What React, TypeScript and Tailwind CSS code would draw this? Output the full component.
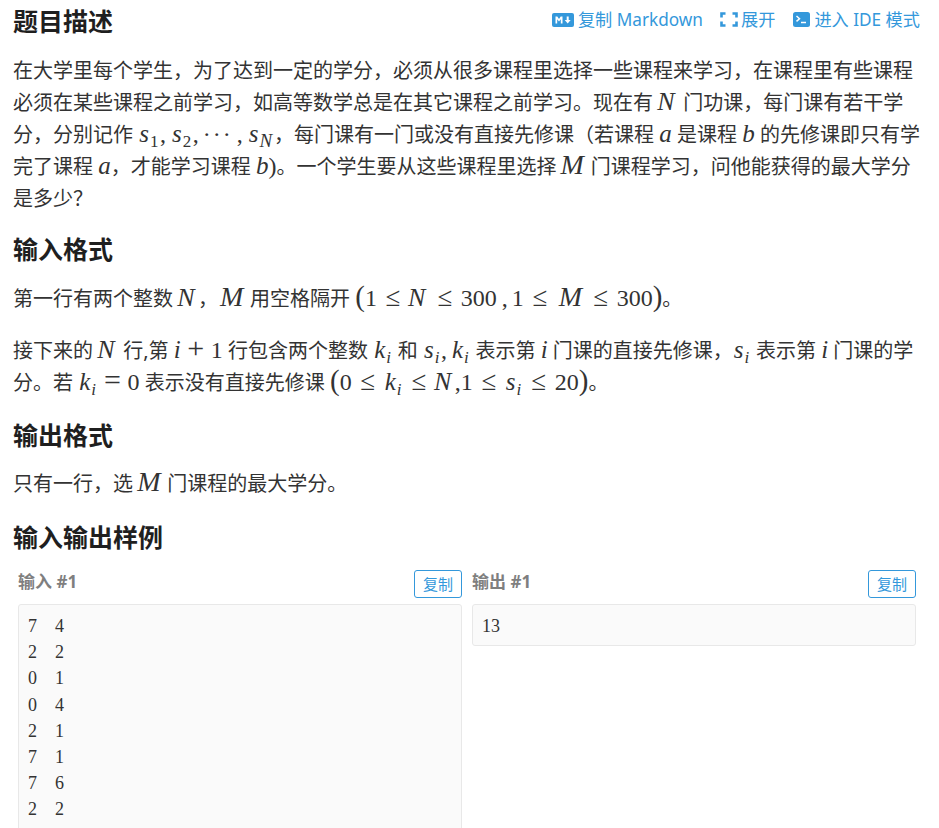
import React from "react";

const serif = { fontFamily: '"Liberation Serif", serif' };

function V({ children }: { children: React.ReactNode }) {
  return <span className="font-['Liberation_Serif',serif] italic text-[25px] leading-[0] mx-[1px]">{children}</span>;
}
function L({ children }: { children: React.ReactNode }) {
  return <span className="font-['Liberation_Serif',serif] italic text-[25px] leading-[0]">{children}</span>;
}
function C({ children }: { children: React.ReactNode }) {
  return <span className="font-['Liberation_Serif',serif] italic text-[26px] leading-[0] ml-[-1px] mr-[3.5px]">{children}</span>;
}
function M() {
  return <span className="font-['Liberation_Serif',serif] italic text-[28px] leading-[0] ml-[-1px] mr-[1.5px]">M</span>;
}
function R({ children, className = "" }: { children: React.ReactNode; className?: string }) {
  return <span className={`font-['Liberation_Serif',serif] text-[24px] leading-[0] ${className}`}>{children}</span>;
}
function S({ children, it = false }: { children: React.ReactNode; it?: boolean }) {
  return (
    <sub className={`font-['Liberation_Serif',serif] text-[17px] leading-[0] align-[-5px] bottom-0 mr-[1.5px] ${it ? "italic" : ""}`}>{children}</sub>
  );
}
function Paren({ c }: { c: string }) {
  return <span className="font-['Liberation_Serif',serif] text-[29px] leading-[0] font-light">{c}</span>;
}
const Le = () => (
  <span className="inline-block w-[18px] mx-[7px] text-center font-['Liberation_Serif',serif] text-[27px] leading-[0]">≤</span>
);
const Op = ({ c }: { c: string }) => (
  <span className="inline-block w-[20px] mx-[5px] text-center font-['Liberation_Serif',serif] text-[30px] font-light leading-[0]">{c}</span>
);

function H2({ children, className = "" }: { children: React.ReactNode; className?: string }) {
  return <h2 className={`text-[25px] leading-[34px] pb-[2px] font-bold text-[#1f1f1f] ${className}`}>{children}</h2>;
}

function Copy() {
  return (
    <button className="w-[48px] h-[28px] rounded-[3px] border border-[#3498db] text-[#3498db] text-[15px] leading-[26px] text-center bg-white">
      复制
    </button>
  );
}

function Sample({ label, lines }: { label: string; lines: string[] }) {
  return (
    <div>
      <div className="flex items-start justify-between h-[28px]">
        <span className="text-[17px] leading-[24px] font-bold text-[#7f7f7f]">{label}</span>
        <Copy />
      </div>
      <pre
        className="mt-[6px] pt-[8px] pb-[6px] px-[9px] border border-[#e8e8e8] rounded-[3px] bg-[#fafafa] text-[18px] leading-[26.2px] [word-spacing:4.5px] text-[#333333]"
        style={serif}
      >
        {lines.join("\n")}
      </pre>
    </div>
  );
}

export default function App() {
  return (
    <div className="h-[828px] w-[939px] overflow-hidden bg-white pl-[13px] pr-[14px] text-[20px] leading-[32px] text-[#333333] font-['Noto_Sans','Noto_Sans_CJK_SC',sans-serif]">
      <div className="flex items-center justify-between pt-[4px] h-[40px] pr-[5px]">
        <H2>题目描述</H2>
        <div className="flex items-center text-[17.2px] leading-[24px] text-[#3498db] mt-[-5px]">
          <svg width="22" height="14" viewBox="0 0 22 14" className="mr-[4px]">
            <rect width="22" height="14" rx="2" fill="#3498db" />
            <path d="M3.5 10.5V3.5h1.8l1.7 2.4 1.7-2.4h1.8v7H8.8V6.2L7 8.6 5.2 6.2v4.3z" fill="#fff" />
            <path d="M14.7 3.5h2v3.4h2l-3 3.6-3-3.6h2z" fill="#fff" />
          </svg>
          <span>复制 Markdown</span>
          <svg width="18" height="15" viewBox="0 0 18 15" className="ml-[17px] mr-[3px]" fill="none" stroke="#3498db" strokeWidth="2.6">
            <path d="M1.5 5.5V1.5h4M12.5 1.5h4v4M16.5 9.5v4h-4M5.5 13.5h-4v-4" />
          </svg>
          <span>展开</span>
          <svg width="17" height="15" viewBox="0 0 17 15" className="ml-[18px] mr-[4px]">
            <rect width="17" height="15" rx="2.5" fill="#3498db" />
            <path d="M3.5 4l3 2.7-3 2.7" fill="none" stroke="#fff" strokeWidth="1.5" />
            <path d="M8 10.5h5" stroke="#fff" strokeWidth="1.5" />
          </svg>
          <span>进入 IDE 模式</span>
        </div>
      </div>

      <p className="mt-[15px] w-[908px]">
        在大学里每个学生，为了达到一定的学分，必须从很多课程里选择一些课程来学习，在课程里有些课程必须在某些课程之前学习，如高等数学总是在其它课程之前学习。现在有 <C>N</C> 门功课，每门课有若干学分，分别记作 <V>s</V><S>1</S><R>,</R><span className="ml-[5px]" /><V>s</V><S>2</S><R>,</R><R className="mx-[4px] tracking-[2px]">···</R><R>,</R><span className="ml-[5px]" /><V>s</V><sub className="font-['Liberation_Serif',serif] text-[19px] leading-[0] align-[-5px] bottom-0 italic mr-[2px]">N</sub>，每门课有一门或没有直接先修课（若课程 <L>a</L> 是课程 <L>b</L> 的先修课即只有学完了课程 <L>a</L>，才能学习课程 <L>b</L><R>)</R>。一个学生要从这些课程里选择 <M /> 门课程学习，问他能获得的最大学分是多少？
      </p>

      <H2 className="mt-[17px]">输入格式</H2>
      <p className="mt-[15px]">
        第一行有两个整数 <C>N</C>，<span className="ml-[3px]" /><M /> 用空格隔开 <Paren c="(" /><R>1</R><Le /><C>N</C><Le /><R>300</R><R className="ml-[5px] mr-[4px]">,</R><R>1</R><Le /><span className="ml-[4px]" /><M /><span className="ml-[1px]" /><Le /><R>300</R><Paren c=")" />。
      </p>
      <p className="mt-[20px] w-[908px]">
        接下来的 <C>N</C> 行,第 <L>i</L><Op c="+" /><R>1</R> 行包含两个整数 <V>k</V><S it>i</S> 和 <V>s</V><S it>i</S><R>,</R><span className="ml-[4px]" /><V>k</V><S it>i</S> 表示第 <L>i</L> 门课的直接先修课，<V>s</V><S it>i</S> 表示第 <L>i</L> 门课的学分。若 <V>k</V><S it>i</S><Op c="=" /><R>0</R> 表示没有直接先修课 <Paren c="(" /><R>0</R><Le /><V>k</V><S it>i</S><Le /><C>N</C><R>,1</R><Le /><V>s</V><S it>i</S><Le /><R>20</R><Paren c=")" />。
      </p>

      <H2 className="mt-[19px]">输出格式</H2>
      <p className="mt-[14px]">
        只有一行，选 <M /> 门课程的最大学分。
      </p>

      <H2 className="mt-[20px]">输入输出样例</H2>
      <div className="grid grid-cols-2 gap-[10px] w-[898px] ml-[5px] mt-[14px] items-start">
        <Sample label="输入 #1" lines={["7  4", "2  2", "0  1", "0  4", "2  1", "7  1", "7  6", "2  2", " ", " "]} />
        <Sample label="输出 #1" lines={["13"]} />
      </div>
    </div>
  );
}
